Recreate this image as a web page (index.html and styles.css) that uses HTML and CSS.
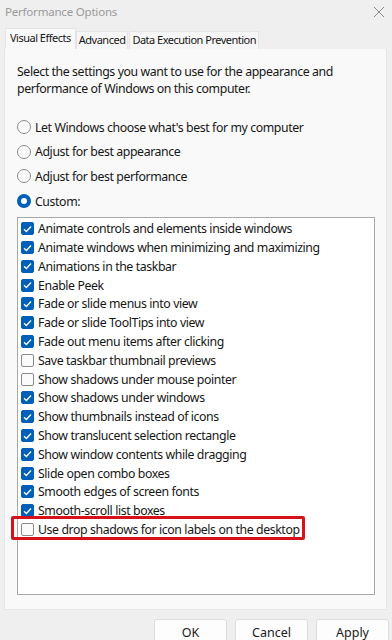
FILE: index.html
```html
<!DOCTYPE html>
<html lang="en">
<head>
    <meta charset="UTF-8">
    <meta name="viewport" content="width=device-width, initial-scale=1.0">
    <title>Performance Options</title>
    <link rel="stylesheet" href="styles.css">
</head>
<body>
    <div class="window">
        <div class="titlebar">
            <span class="title">Performance Options</span>
            <span class="close">
                <svg width="12" height="12" viewBox="0 0 12 12"><path d="M1 1L11 11M11 1L1 11" stroke="#8a8a8a" stroke-width="1"/></svg>
            </span>
        </div>

        <div class="tabs">
            <div class="tab active">Visual Effects</div>
            <div class="tab">Advanced</div>
            <div class="tab">Data Execution Prevention</div>
        </div>

        <div class="panel">
            <p class="intro">Select the settings you want to use for the appearance and performance of Windows on this computer.</p>

            <div class="radios">
                <label class="radio"><span class="dot"></span>Let Windows choose what's best for my computer</label>
                <label class="radio"><span class="dot"></span>Adjust for best appearance</label>
                <label class="radio"><span class="dot"></span>Adjust for best performance</label>
                <label class="radio"><span class="dot on"></span>Custom:</label>
            </div>

            <div class="listbox" id="list"></div>
        </div>

        <div class="buttons">
            <button>OK</button>
            <button>Cancel</button>
            <button>Apply</button>
        </div>
    </div>

    <script>
        const items = [
            ["Animate controls and elements inside windows", true],
            ["Animate windows when minimizing and maximizing", true],
            ["Animations in the taskbar", true],
            ["Enable Peek", true],
            ["Fade or slide menus into view", true],
            ["Fade or slide ToolTips into view", true],
            ["Fade out menu items after clicking", true],
            ["Save taskbar thumbnail previews", false],
            ["Show shadows under mouse pointer", false],
            ["Show shadows under windows", true],
            ["Show thumbnails instead of icons", true],
            ["Show translucent selection rectangle", true],
            ["Show window contents while dragging", true],
            ["Slide open combo boxes", true],
            ["Smooth edges of screen fonts", true],
            ["Smooth-scroll list boxes", true],
            ["Use drop shadows for icon labels on the desktop", false]
        ];
        const tick = '<svg width="9" height="8" viewBox="0 0 9 8"><path d="M1 4.2L3.4 6.5L8 1.5" fill="none" stroke="#fff" stroke-width="1.3"/></svg>';
        const list = document.getElementById("list");
        items.forEach(([text, on], i) => {
            const row = document.createElement("div");
            row.className = "item" + (i === items.length - 1 ? " marked" : "");
            row.innerHTML = `<span class="box ${on ? "on" : ""}">${on ? tick : ""}</span>${text}`;
            list.appendChild(row);
        });
    </script>
</body>
</html>
```

FILE: styles.css
```css
body {
    margin: 0;
    background: #efefef;
    font-family: 'Noto Sans', 'Open Sans', sans-serif;
    font-size: 12.3px;
    letter-spacing: -0.4px;
    color: #161616;
}

.window {
    width: 392px;
    height: 640px;
    overflow: hidden;
}

.titlebar {
    height: 22px;
    display: flex;
    align-items: center;
    justify-content: space-between;
    padding: 0 7px 0 5px;
}

.title {
    color: #9a9a9a;
    font-size: 11.5px;
    letter-spacing: -0.2px;
}

.close {
    display: flex;
    padding-top: 2px;
}

.tabs {
    display: flex;
    align-items: flex-end;
    height: 27px;
    padding-left: 5px;
}

.tab {
    padding: 0 2px;
    height: 17px;
    line-height: 16px;
    font-size: 11px;
    letter-spacing: -0.5px;
    background: #f6f6f6;
    border: 1px solid #e4e4e4;
    border-bottom: none;
    margin-right: 1px;
}

.tab.active {
    height: 20px;
    line-height: 18px;
    background: #f9f9f9;
    padding: 0 4px;
    margin-right: 0;
}

.panel {
    margin: 0 5px 0 4px;
    height: 561px;
    background: #f9f9f9;
    border: 1px solid #e6e6e6;
    border-top: none;
    box-sizing: border-box;
    padding: 14px 11px 0 12px;
}

.intro {
    margin: 0;
    line-height: 17px;
}

.radios {
    margin-top: 18px;
    display: flex;
    flex-direction: column;
}

.radio {
    display: flex;
    align-items: center;
    height: 24.6px;
    gap: 4px;
}

.dot {
    width: 12px;
    height: 12px;
    border: 1px solid #8a8a8a;
    border-radius: 50%;
    background: #fdfdfd;
    box-sizing: content-box;
}

.dot.on {
    width: 6px;
    height: 6px;
    border: 4px solid #005fb8;
    background: #fff;
}

.listbox {
    margin-top: 4px;
    height: 378px;
    background: #fff;
    border: 1px solid #a9a9a9;
    padding: 1px 0 0 3px;
    box-sizing: border-box;
}

.item {
    display: flex;
    align-items: center;
    gap: 4px;
    height: 18.8px;
    white-space: nowrap;
}

.item.marked {
    position: relative;
}

.item.marked::after {
    content: "";
    position: absolute;
    left: -10px;
    top: -4px;
    width: 288px;
    height: 18px;
    border: 3px solid #d7101c;
    border-radius: 2px;
}

.box {
    width: 11px;
    height: 11px;
    border: 1px solid #8a8a8a;
    border-radius: 2px;
    background: #fbfbfb;
    display: flex;
    align-items: center;
    justify-content: center;
}

.box.on {
    background: #005fb8;
    border-color: #005fb8;
}

.buttons {
    display: flex;
    justify-content: flex-end;
    gap: 8px;
    padding: 9px 3px 0 0;
}

button {
    width: 73px;
    height: 26px;
    font-family: inherit;
    font-size: 12.5px;
    color: #1a1a1a;
    background: #fdfdfd;
    border: 1px solid #dcdcdc;
    border-radius: 3px;
}
```
